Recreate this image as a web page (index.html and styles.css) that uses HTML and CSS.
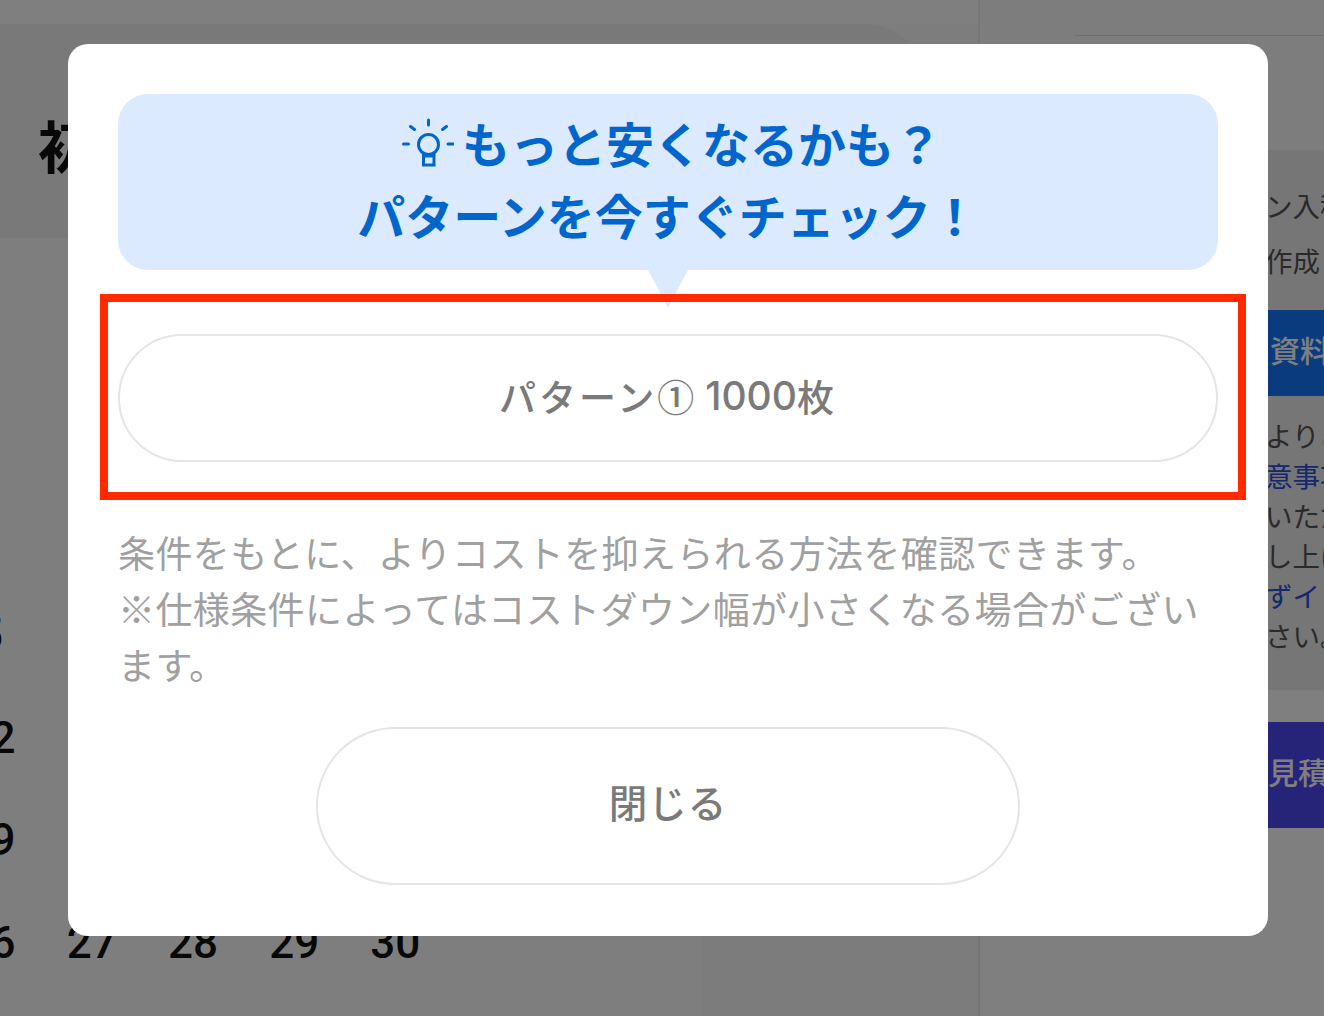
FILE: index.html
```html
<!DOCTYPE html>
<html lang="ja">
<head>
<meta charset="utf-8">
<title>パターン</title>
<link rel="stylesheet" href="styles.css">
</head>
<body>
<div class="page">
  <main class="main">
    <div class="strip"></div>
    <div class="hero-row"><header class="hero"><h1 class="hero-title">初回ご注文</h1></header></div>
    <div class="lower">
      <section class="calendar">
        <div class="grid">
          <span>5</span><span>6</span><span>7</span><span>8</span><span>9</span><span></span><span></span>
          <span>12</span><span>13</span><span>14</span><span>15</span><span>16</span><span></span><span></span>
          <span>19</span><span>20</span><span>21</span><span>22</span><span>23</span><span></span><span></span>
          <span>26</span><span>27</span><span>28</span><span>29</span><span>30</span><span></span><span></span>
        </div>
      </section>
      <aside class="mid"></aside>
    </div>
  </main>
  <aside class="side">
    <div class="side-top"><div class="side-rule"></div></div>
    <div class="panel">
      <p class="line-wide">かんたん・デザイン入稿</p>
      <p class="line-wide">デザインデータの作成</p>
      <div class="cta cta-blue">資料請求はこちら</div>
      <div class="notes">
        <p>ご注文の際には、よりご</p>
        <p class="link">ご注文前の「ご注意事項」</p>
        <p>内容をご確認の上いただ</p>
        <p>宜しくお願いを申し上げます</p>
        <p class="link">ご不明な点は、まずイ</p>
        <p>お問い合わせください。</p>
      </div>
    </div>
    <div class="cta cta-indigo">見積書を保存する</div>
  </aside>
</div>

<div class="overlay">
  <div class="modal">
    <div class="bubble">
      <p class="bubble-line">
        <svg class="bulb" viewBox="0 0 52 52" width="52" height="52" fill="none" stroke="#0066cc" stroke-width="3" stroke-linecap="round" aria-hidden="true">
          <path d="M26.5 3v5M8.5 9.5l4 3M44.5 9.5l-4 3M1.5 27h5M46 27h5"/>
          <circle cx="26.5" cy="27.5" r="10"/>
          <path d="M21.5 37v11h10.500V37M21.500 39h10.500"/>
        </svg>もっと安くなるかも？
      </p>
      <p class="bubble-line">パターンを今すぐチェック！</p>
    </div>
    <div class="choice-wrap">
      <button class="pill choice" type="button">パターン① <span class="num">1000</span>枚</button>
      <div class="mark"></div>
    </div>
    <p class="note">条件をもとに、よりコストを抑えられる方法を確認できます。<br>※仕様条件によってはコストダウン幅が小さくなる場合がございます。</p>
    <button class="pill close" type="button">閉じる</button>
  </div>
</div>
</body>
</html>
```
FILE: styles.css
```css
* { box-sizing: border-box; }
html, body { margin: 0; height: 100%; overflow: hidden; }
body {
  background: #fff;
  color: #111;
  font-family: "Noto Sans CJK JP", "Noto Sans", sans-serif;
}
p, h1 { margin: 0; }

/* page underneath the dialog */
.page { display: flex; width: 1324px; height: 1016px; overflow: hidden; }
.main { width: 978px; display: flex; flex-direction: column; flex: none; }
.strip { height: 24px; background: #fff; }
.hero-row { height: 214px; padding-right: 53px; background: #fafafa; }
.hero {
  height: 214px;
  padding: 84px 0 0 38px;
  background: #f2f2f2;
  border-top-right-radius: 60px;
  overflow: hidden;
}
.hero-title { font-size: 56px; line-height: 72px; font-weight: 700; white-space: nowrap; }
.lower { flex: 1; display: flex; background: #fff; }
.calendar { width: 703px; flex: none; padding-top: 346px; overflow: hidden; background: #fdfdfd; }
.grid {
  display: grid;
  grid-template-columns: repeat(7, 101.2px);
  grid-auto-rows: 102.5px;
  margin-left: -60px;
  font-family: Roboto, sans-serif;
  font-weight: 500;
  font-size: 44px;
  color: #111;
}
.grid span { display: flex; align-items: center; justify-content: center; }
.mid { flex: 1; background: #f8f8f8; }

.side { flex: 1; min-width: 0; overflow: hidden; background: #fff; border-left: 2px solid #ececec; }
.side-top { height: 150px; padding: 35px 0 0 95px; background: #fbfbfb; }
.side-rule { height: 1px; background: #ddd; }
.panel { height: 540px; padding-top: 28px; background: #ededed; color: #555; }
.line-wide {
  padding-left: 65px;
  font-size: 27.5px;
  line-height: 55px;
  white-space: nowrap;
}
.cta {
  color: #fff;
  font-size: 30px;
  font-weight: 500;
  white-space: nowrap;
  display: flex;
  align-items: center;
  padding-bottom: 8px;
}
.cta-blue { height: 86px; margin-top: 22px; padding-left: 290px; background: #1676fe; }
.cta-indigo { height: 106px; margin-top: 32px; padding-left: 288px; background: #4c48f0; }
.notes { padding: 19px 0 0 65px; font-size: 27.5px; line-height: 40px; white-space: nowrap; }
.link { color: #2a50d8; }

/* dialog */
.overlay {
  position: fixed;
  inset: 0;
  display: flex;
  justify-content: flex-start;
  align-items: flex-start;
  padding: 44px 0 0 68px;
  background: rgba(0, 0, 0, .5);
}
.modal {
  width: 1200px;
  height: 892px;
  padding: 50px;
  background: #fff;
  border-radius: 20px;
}
.bubble {
  position: relative;
  height: 176px;
  padding-top: 12px;
  background: #dbeafe;
  border-radius: 30px;
  color: #0066cc;
  text-align: center;
}
.bubble::after {
  content: "";
  position: absolute;
  left: 50%;
  top: 100%;
  margin-left: -20px;
  border-style: solid;
  border-width: 38px 20px 0;
  border-color: #dbeafe transparent transparent;
}
.bubble-line { font-size: 48px; line-height: 72px; font-weight: 700; white-space: nowrap; }
.bulb { vertical-align: -6px; margin: 0 8px; }
.choice-wrap { position: relative; margin-top: 64px; }
.pill {
  display: flex;
  align-items: center;
  justify-content: center;
  background: #fff;
  border: 2px solid #e5e5e5;
  color: #7a7a7a;
  font-family: inherit;
  font-weight: 500;
  white-space: nowrap;
}
.choice {
  width: 100%;
  height: 128px;
  padding: 0 0 5px;
  border-radius: 64px;
  font-size: 37px;
  letter-spacing: 3px;
}
.num { font-family: Inter, sans-serif; font-weight: 500; font-size: 39px; letter-spacing: 0; margin-left: 8px; }
.mark {
  position: absolute;
  left: -18px;
  right: -28px;
  top: -40px;
  bottom: -38px;
  border: 8px solid #ff2a00;
}
.note {
  margin-top: 62px;
  font-size: 37px;
  letter-spacing: .4px;
  line-height: 56px;
  color: #a0a0a0;
}
.close {
  width: 704px;
  height: 158px;
  margin: 35px auto 0;
  padding: 0 0 10px;
  border-radius: 79px;
  font-size: 38.5px;
  letter-spacing: 1px;
}
```
